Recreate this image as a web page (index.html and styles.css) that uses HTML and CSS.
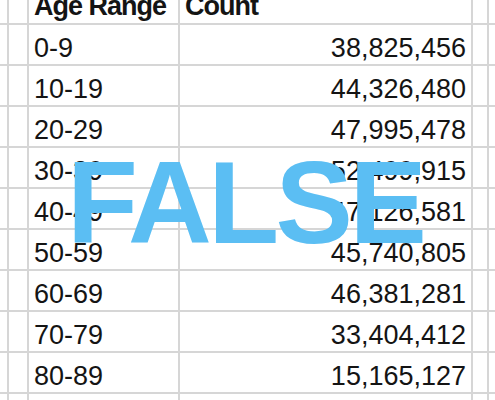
FILE: index.html
```html
<!DOCTYPE html>
<html>
<head>
<meta charset="utf-8">
<link rel="stylesheet" href="styles.css">
</head>
<body>
<div class="sheet">
  <div class="grid">
    <div class="c e"></div><div class="c e"></div><div class="c hd"><span>Age Range</span></div><div class="c hd"><span>Count</span></div><div class="c e"></div><div class="c e last"></div>
    <div class="c e"></div><div class="c e"></div><div class="c">0-9</div><div class="c num">38,825,456</div><div class="c e"></div><div class="c e last"></div>
    <div class="c e"></div><div class="c e"></div><div class="c">10-19</div><div class="c num">44,326,480</div><div class="c e"></div><div class="c e last"></div>
    <div class="c e"></div><div class="c e"></div><div class="c">20-29</div><div class="c num">47,995,478</div><div class="c e"></div><div class="c e last"></div>
    <div class="c e"></div><div class="c e"></div><div class="c">30-39</div><div class="c num">52,499,915</div><div class="c e"></div><div class="c e last"></div>
    <div class="c e"></div><div class="c e"></div><div class="c">40-49</div><div class="c num">47,126,581</div><div class="c e"></div><div class="c e last"></div>
    <div class="c e"></div><div class="c e"></div><div class="c">50-59</div><div class="c num">45,740,805</div><div class="c e"></div><div class="c e last"></div>
    <div class="c e"></div><div class="c e"></div><div class="c">60-69</div><div class="c num">46,381,281</div><div class="c e"></div><div class="c e last"></div>
    <div class="c e"></div><div class="c e"></div><div class="c">70-79</div><div class="c num">33,404,412</div><div class="c e"></div><div class="c e last"></div>
    <div class="c e"></div><div class="c e"></div><div class="c">80-89</div><div class="c num">15,165,127</div><div class="c e"></div><div class="c e last"></div>
    <div class="c e"></div><div class="c e"></div><div class="c"></div><div class="c num"></div><div class="c e"></div><div class="c e last"></div>
  </div>
  <div class="stamp">FALSE</div>
</div>
</body>
</html>
```
FILE: styles.css
```css
html, body {
  margin: 0;
  padding: 0;
  background: #ffffff;
}
.sheet {
  position: relative;
  width: 495px;
  height: 400px;
  overflow: hidden;
}
.grid {
  display: grid;
  grid-template-columns: 9px 20px 151px 293px 16px 6px;
  grid-template-rows: 25px repeat(9, 41px) 41px;
  font-family: "Liberation Sans", Arial, sans-serif;
  font-size: 27px;
  color: #141414;
}
.c {
  box-sizing: border-box;
  border-right: 2px solid #d6d6d6;
  border-bottom: 2px solid #d6d6d6;
  padding: 8px 5px 0 5px;
  line-height: 30px;
  white-space: nowrap;
  overflow: hidden;
}
.c.e {
  padding: 0;
}
.c.last {
  border-right: none;
}
.num {
  text-align: right;
}
.hd {
  padding-top: 0;
  font-weight: bold;
  letter-spacing: -1px;
  overflow: visible;
}
.hd span {
  display: block;
  margin-top: -9px;
}
.stamp {
  position: absolute;
  left: 67px;
  top: 145px;
  font-family: "Liberation Sans", Arial, sans-serif;
  font-weight: bold;
  font-size: 116px;
  line-height: 116px;
  letter-spacing: -3.5px;
  color: #5bbef3;
}
```
